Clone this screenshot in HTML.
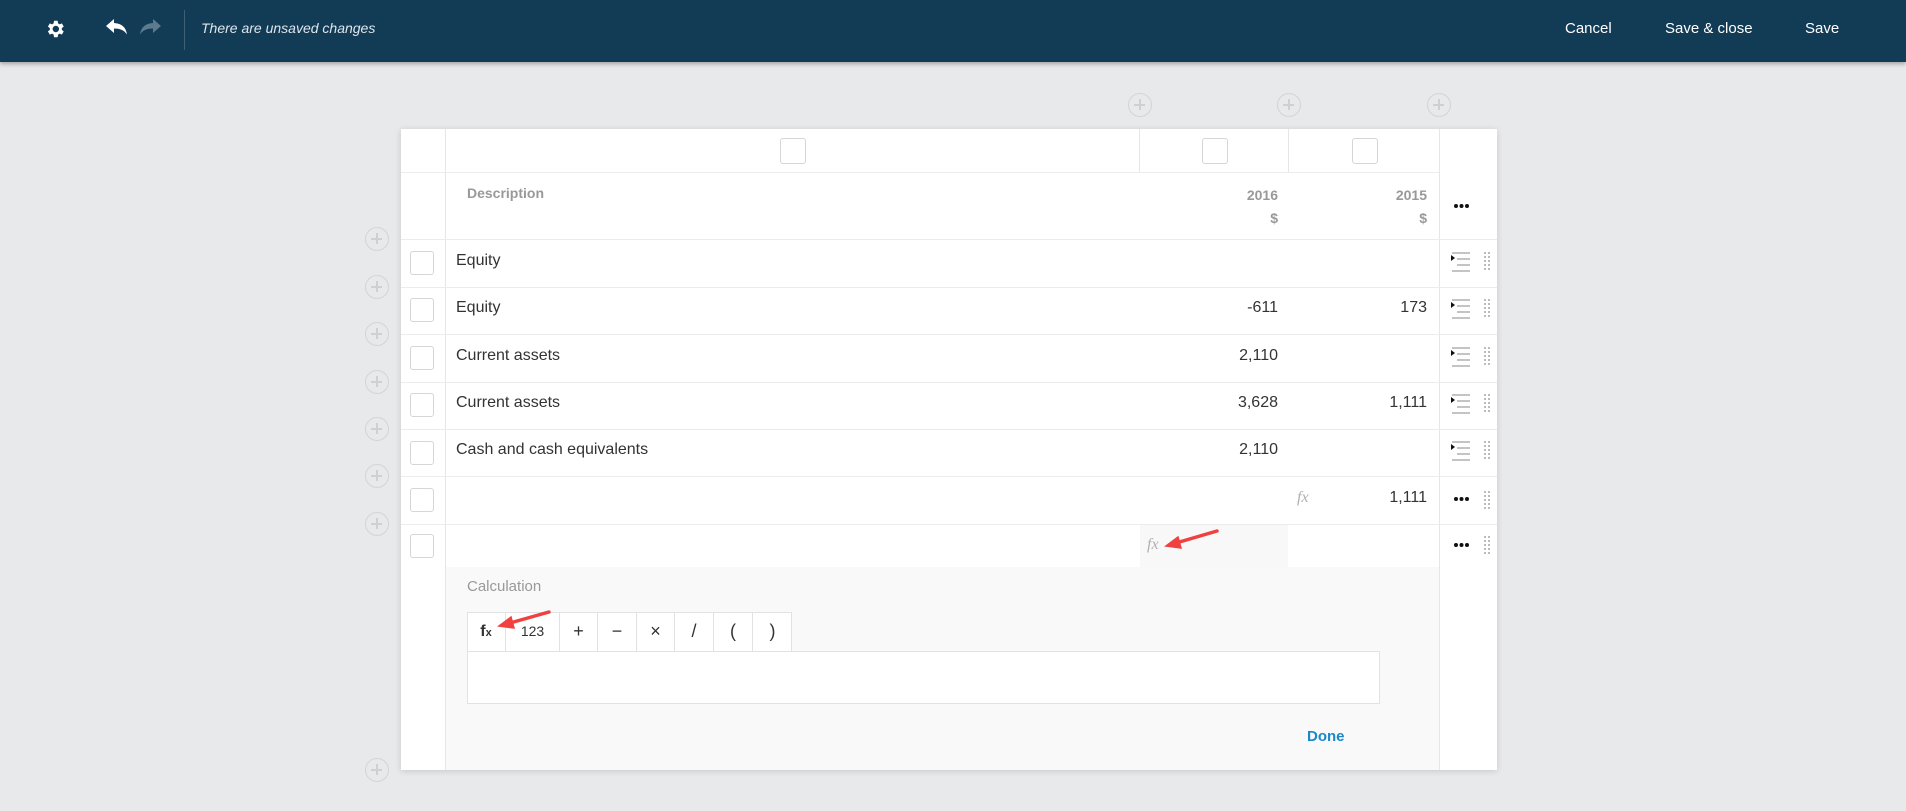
<!DOCTYPE html>
<html><head><meta charset="utf-8"><style>
*{margin:0;padding:0;box-sizing:border-box}
body{width:1906px;height:811px;background:#e8e9eb;font-family:"Liberation Sans",sans-serif;position:relative;overflow:hidden}
.a{position:absolute}
.hdr{left:0;top:0;width:1906px;height:62px;background:#123b56;box-shadow:0 2px 4px rgba(0,0,0,.3)}
.hb{color:#fff;font-size:15px;top:20px}
.card{left:401px;top:129px;width:1096px;height:641px;background:#fff;box-shadow:0 1px 6px rgba(0,0,0,.15)}
.vl{background:#e6e6e6;width:1px}
.hl{background:#ececec;height:1px}
.cb{width:24px;height:24px;border:1px solid #d6d6d6;border-radius:3px;background:#fff}
.plus{width:24px;height:24px;border:1.5px solid #d4d4d4;border-radius:50%}
.plus:before{content:"";position:absolute;left:5px;top:10px;width:11px;height:1.5px;background:#d0d0d0}
.plus:after{content:"";position:absolute;left:10px;top:5px;width:1.5px;height:11px;background:#d0d0d0}
.t{font-size:16px;color:#333}
.num{font-size:16px;color:#333;text-align:right;width:140px}
.fx{font-family:"Liberation Serif",serif;font-style:italic;color:#b0b0b0;font-size:16px}
.tb{top:612px;height:39px;border-right:1px solid #e2e2e2;text-align:center;line-height:39px;font-size:18px;color:#333}
</style></head><body>
<div class="a hdr"></div>
<svg class="a" style="left:44px;top:18px" width="22" height="22" viewBox="0 0 24 24"><path fill="#fff" d="M19.4 13a7.5 7.5 0 0 0 0-2l2.1-1.6-2-3.5-2.5 1a7 7 0 0 0-1.7-1L14.9 3h-4l-.4 2.9a7 7 0 0 0-1.7 1l-2.5-1-2 3.5L6.4 11a7.5 7.5 0 0 0 0 2l-2.1 1.6 2 3.5 2.5-1a7 7 0 0 0 1.7 1l.4 2.9h4l.4-2.9a7 7 0 0 0 1.7-1l2.5 1 2-3.5zM12.9 15.5a3.5 3.5 0 1 1 0-7 3.5 3.5 0 0 1 0 7z"/></svg>
<svg class="a" style="left:105px;top:17px" width="24" height="20" viewBox="0 0 24 20"><path fill="#fff" d="M9 2 1 9l8 7v-4.5c6 0 10 1.5 13 6-1-7-5-11-13-11.5z"/></svg>
<svg class="a" style="left:138px;top:17px" width="24" height="20" viewBox="0 0 24 20"><path fill="#5d7a8e" d="M15 2l8 7-8 7v-4.5c-6 0-10 1.5-13 6 1-7 5-11 13-11.5z"/></svg>
<div class="a" style="left:184px;top:10px;width:1px;height:40px;background:#3e5f75"></div>
<div class="a" style="left:201px;top:20px;color:#dfe6ec;font-style:italic;font-size:14px">There are unsaved changes</div>
<div class="a hb" style="left:1565px">Cancel</div>
<div class="a hb" style="left:1665px">Save &amp; close</div>
<div class="a hb" style="left:1805px">Save</div>

<div class="a plus" style="left:1128px;top:93px"></div>
<div class="a plus" style="left:1277px;top:93px"></div>
<div class="a plus" style="left:1427px;top:93px"></div>

<div class="a card"></div>
<div class="a vl" style="left:445px;top:129px;height:641px"></div>
<div class="a vl" style="left:1139px;top:129px;height:43px"></div>
<div class="a vl" style="left:1288px;top:129px;height:43px"></div>
<div class="a vl" style="left:1439px;top:129px;height:641px"></div>
<div class="a hl" style="left:401px;top:172px;width:1038px"></div>
<div class="a cb" style="left:780px;top:138px;width:26px;height:26px"></div>
<div class="a cb" style="left:1202px;top:138px;width:26px;height:26px"></div>
<div class="a cb" style="left:1352px;top:138px;width:26px;height:26px"></div>

<div class="a" style="left:467px;top:185px;font-size:14px;font-weight:bold;color:#999">Description</div>
<div class="a" style="left:1200px;top:184px;width:78px;text-align:right;font-size:14px;font-weight:bold;color:#999;line-height:23px">2016<br>$</div>
<div class="a" style="left:1349px;top:184px;width:78px;text-align:right;font-size:14px;font-weight:bold;color:#999;line-height:23px">2015<br>$</div>

<svg class="a" style="left:0;top:0" width="1906" height="811">
<g id="d" fill="#111"><circle cx="1456" cy="206" r="2"/><circle cx="1461.5" cy="206" r="2"/><circle cx="1467" cy="206" r="2"/></g>
<use href="#d" y="293"/><use href="#d" y="339"/>
</svg>

<div class="a hl" style="left:401px;top:239px;width:1096px"></div>
<div class="a hl" style="left:401px;top:287px;width:1096px"></div>
<div class="a hl" style="left:401px;top:334px;width:1096px"></div>
<div class="a hl" style="left:401px;top:382px;width:1096px"></div>
<div class="a hl" style="left:401px;top:429px;width:1096px"></div>
<div class="a hl" style="left:401px;top:476px;width:1096px"></div>
<div class="a hl" style="left:401px;top:524px;width:1096px"></div>

<div class="a cb" style="left:410px;top:251px"></div>
<div class="a cb" style="left:410px;top:298px"></div>
<div class="a cb" style="left:410px;top:346px"></div>
<div class="a cb" style="left:410px;top:393px"></div>
<div class="a cb" style="left:410px;top:441px"></div>
<div class="a cb" style="left:410px;top:488px"></div>
<div class="a cb" style="left:410px;top:534px"></div>

<div class="a t" style="left:456px;top:252px">Equity</div>
<div class="a t" style="left:456px;top:299px">Equity</div>
<div class="a t" style="left:456px;top:347px">Current assets</div>
<div class="a t" style="left:456px;top:394px">Current assets</div>
<div class="a t" style="left:456px;top:441px">Cash and cash equivalents</div>

<div class="a num" style="left:1138px;top:299px">-611</div>
<div class="a num" style="left:1287px;top:299px">173</div>
<div class="a num" style="left:1138px;top:347px">2,110</div>
<div class="a num" style="left:1138px;top:394px">3,628</div>
<div class="a num" style="left:1287px;top:394px">1,111</div>
<div class="a num" style="left:1138px;top:441px">2,110</div>
<div class="a num" style="left:1287px;top:489px">1,111</div>
<div class="a fx" style="left:1297px;top:489px">fx</div>
<div class="a" style="left:1140px;top:525px;width:148px;height:42px;background:#f8f8f8"></div>
<div class="a fx" style="left:1147px;top:536px">fx</div>

<svg class="a" style="left:1450px;top:252px" width="44" height="210" viewBox="0 0 44 210">
<g id="r"><path d="M1 3l4 3-4 3z" fill="#111"/><g stroke="#c4c4c4" stroke-width="2"><path d="M2 1h18M7 7h13M7 13h13M2 19h18"/></g>
<g fill="#bbb"><rect x="34" y="0" width="2" height="2"/><rect x="38" y="0" width="2" height="2"/><rect x="34" y="4" width="2" height="2"/><rect x="38" y="4" width="2" height="2"/><rect x="34" y="8" width="2" height="2"/><rect x="38" y="8" width="2" height="2"/><rect x="34" y="12" width="2" height="2"/><rect x="38" y="12" width="2" height="2"/><rect x="34" y="16" width="2" height="2"/><rect x="38" y="16" width="2" height="2"/></g></g>
<use href="#r" y="47"/><use href="#r" y="95"/><use href="#r" y="142"/><use href="#r" y="189"/>
</svg>
<svg class="a" style="left:1483px;top:491px" width="8" height="80"><g fill="#bbb"><rect x="1" y="0" width="2" height="2"/><rect x="5" y="0" width="2" height="2"/><rect x="1" y="4" width="2" height="2"/><rect x="5" y="4" width="2" height="2"/><rect x="1" y="8" width="2" height="2"/><rect x="5" y="8" width="2" height="2"/><rect x="1" y="12" width="2" height="2"/><rect x="5" y="12" width="2" height="2"/><rect x="1" y="16" width="2" height="2"/><rect x="5" y="16" width="2" height="2"/><rect x="1" y="45" width="2" height="2"/><rect x="5" y="45" width="2" height="2"/><rect x="1" y="49" width="2" height="2"/><rect x="5" y="49" width="2" height="2"/><rect x="1" y="53" width="2" height="2"/><rect x="5" y="53" width="2" height="2"/><rect x="1" y="57" width="2" height="2"/><rect x="5" y="57" width="2" height="2"/><rect x="1" y="61" width="2" height="2"/><rect x="5" y="61" width="2" height="2"/></g></svg>

<div class="a" style="left:446px;top:567px;width:993px;height:203px;background:#f9f9f9"></div>
<div class="a" style="left:467px;top:578px;font-size:15px;color:#999">Calculation</div>
<div class="a" style="left:467px;top:612px;width:325px;height:40px;border:1px solid #e2e2e2;background:#fff"></div>
<div class="a tb" style="left:467px;width:39px;font-size:16px;font-weight:bold">f<span style="font-size:11px">x</span></div>
<div class="a tb" style="left:506px;width:54px;font-size:14px">123</div>
<div class="a tb" style="left:560px;width:38px">+</div>
<div class="a tb" style="left:598px;width:39px">−</div>
<div class="a tb" style="left:637px;width:38px">×</div>
<div class="a tb" style="left:675px;width:39px">/</div>
<div class="a tb" style="left:714px;width:39px">(</div>
<div class="a tb" style="left:753px;width:39px;border-right:none">)</div>
<div class="a" style="left:467px;top:651px;width:913px;height:53px;border:1px solid #e2e2e2;background:#fff"></div>
<div class="a" style="left:1307px;top:728px;font-size:15px;font-weight:bold;color:#1a88c9">Done</div>

<div class="a plus" style="left:365px;top:227px"></div>
<div class="a plus" style="left:365px;top:275px"></div>
<div class="a plus" style="left:365px;top:322px"></div>
<div class="a plus" style="left:365px;top:370px"></div>
<div class="a plus" style="left:365px;top:417px"></div>
<div class="a plus" style="left:365px;top:464px"></div>
<div class="a plus" style="left:365px;top:512px"></div>
<div class="a plus" style="left:365px;top:758px"></div>

<svg class="a" style="left:0;top:0" width="1906" height="811">
<g fill="#f04040" stroke="#f04040" stroke-linecap="round">
<path d="M1217 531 1176 543" stroke-width="3.5"/><path d="M1166 546l12-9 3 11z" stroke-width="1.5"/>
<path d="M549 612 510 623" stroke-width="3.5"/><path d="M499 626l12-9 3 11z" stroke-width="1.5"/>
</g></svg>
</body></html>
